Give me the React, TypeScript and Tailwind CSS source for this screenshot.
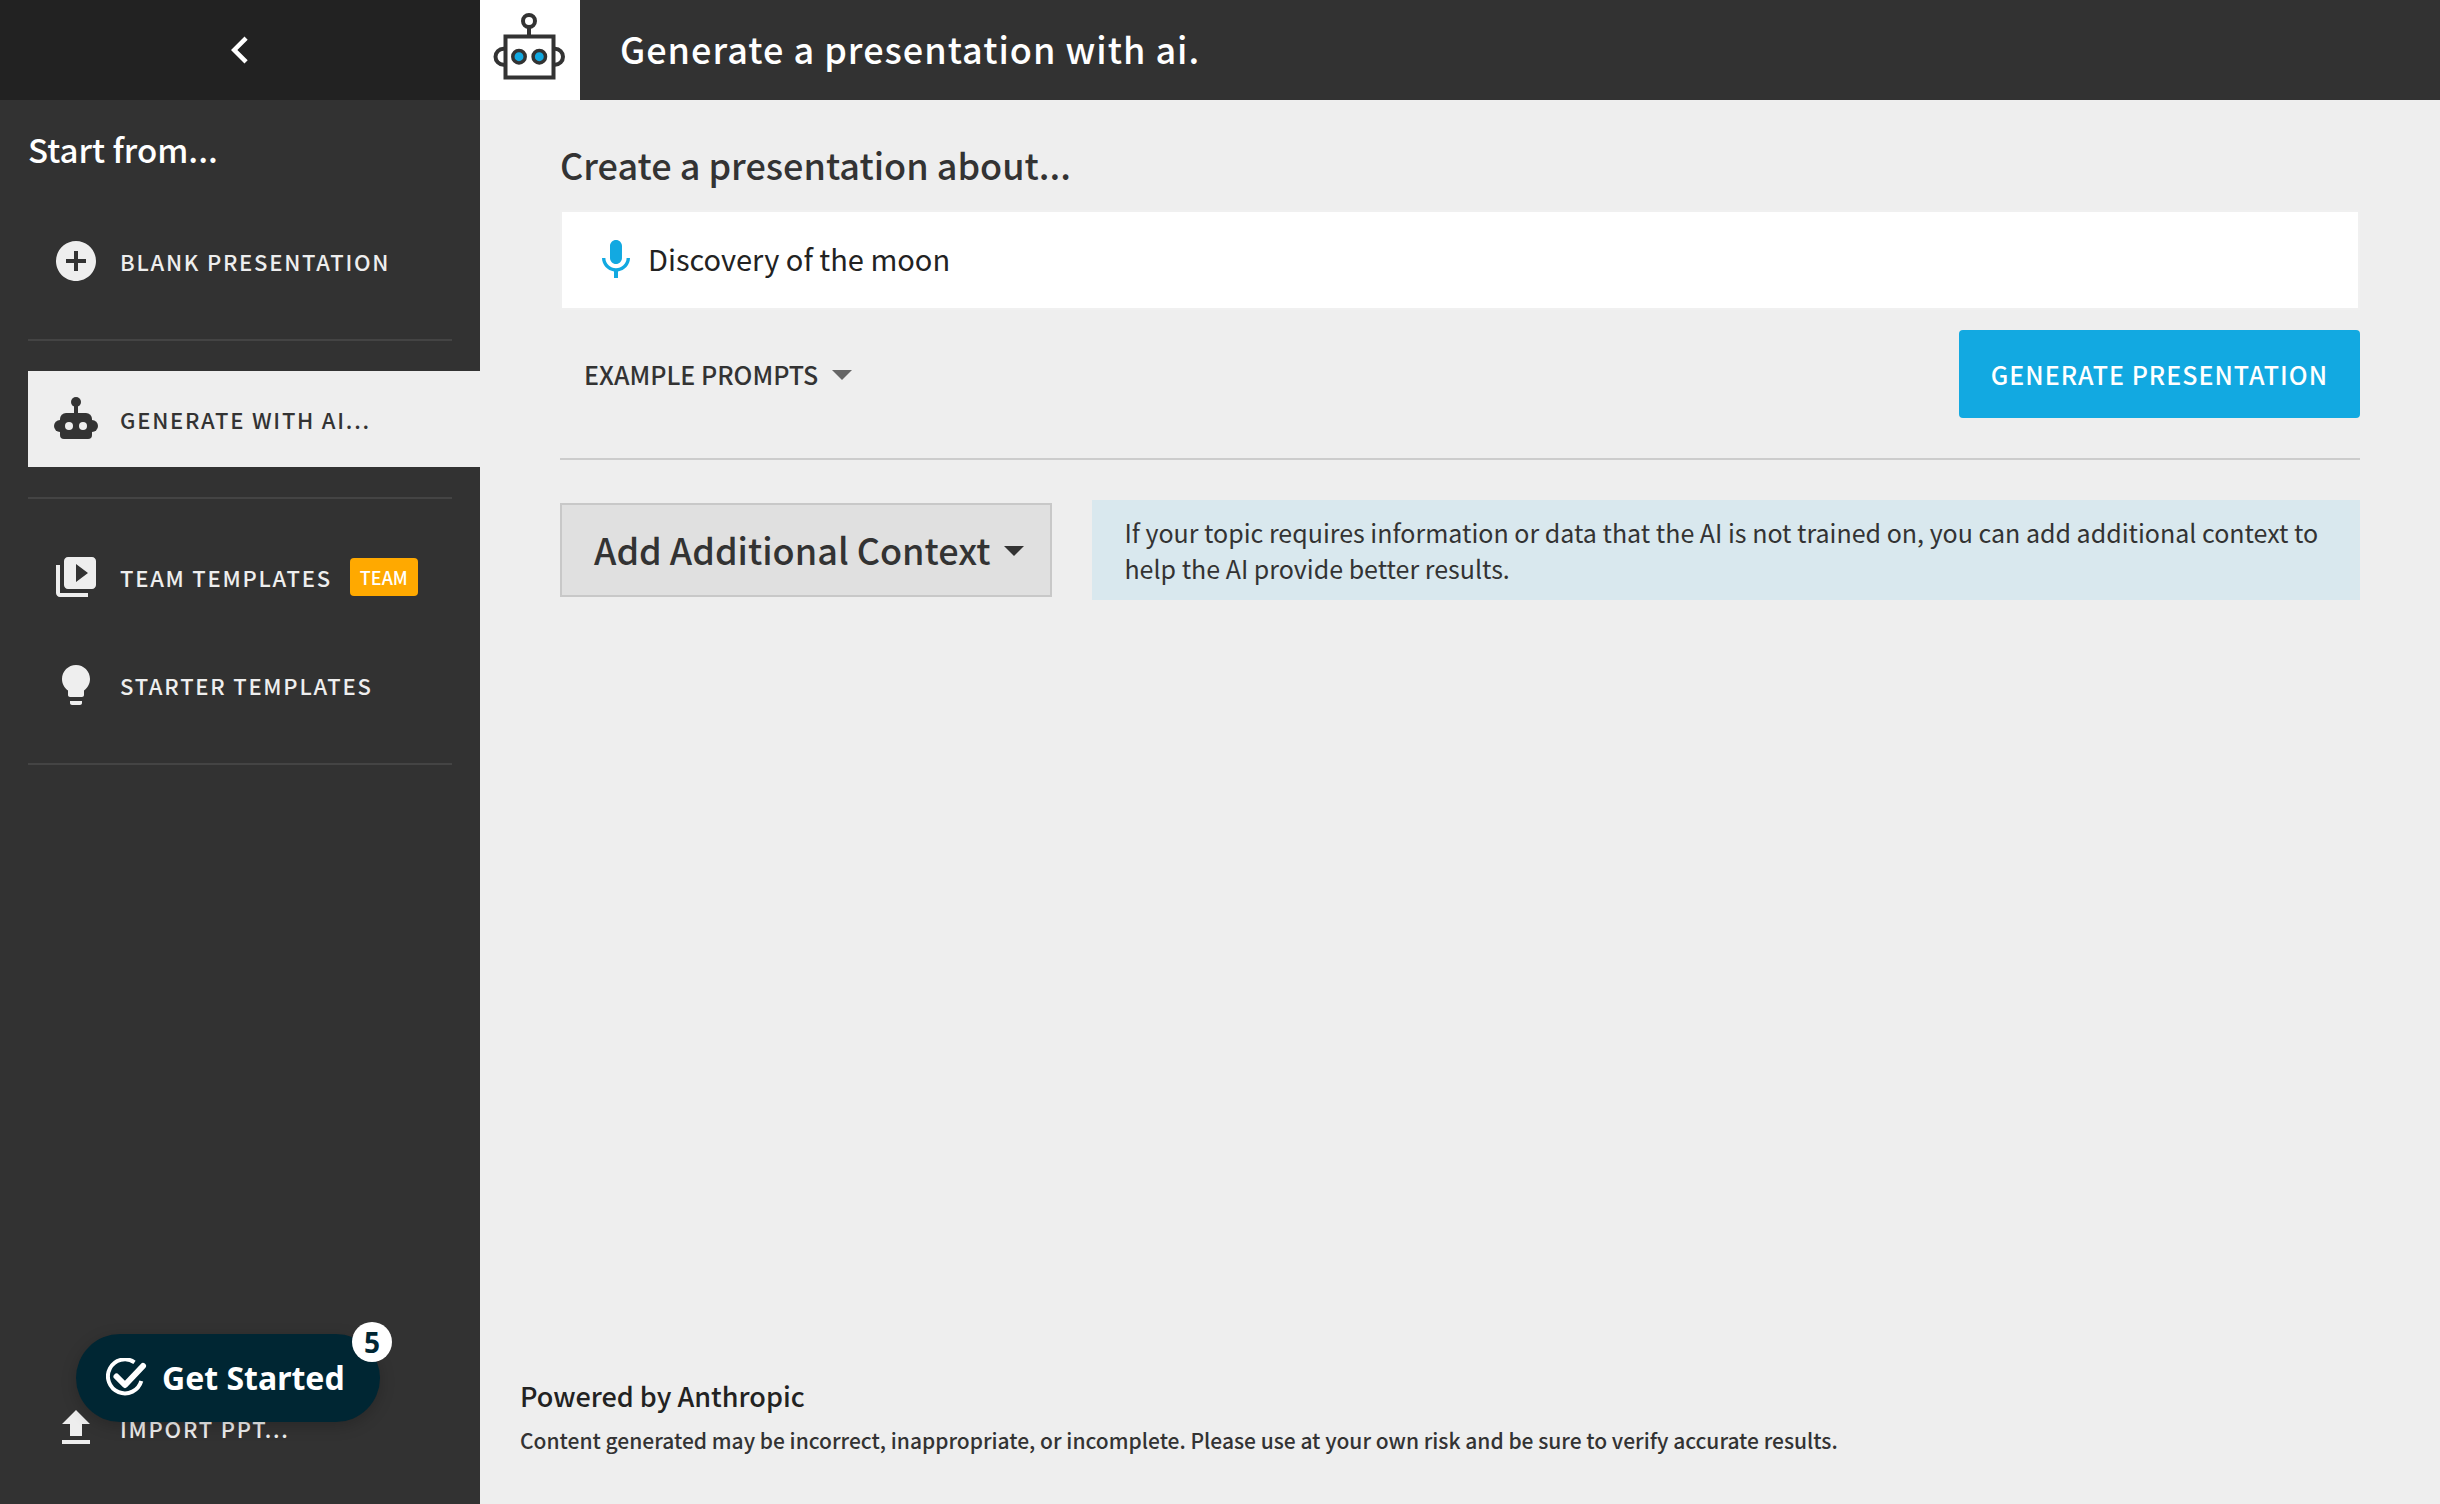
import type { ReactNode } from "react";
import { MdAddCircle, MdArrowDropDown, MdChevronLeft } from "react-icons/md";

function Icon({ d, className = "" }: { d: string; className?: string }) {
  return (
    <svg viewBox="0 0 24 24" fill="currentColor" aria-hidden="true" className={`size-12 shrink-0 ${className}`}>
      <path d={d} />
    </svg>
  );
}

const MIC =
  "M12 14c1.66 0 2.99-1.34 2.99-3L15 5c0-1.66-1.34-3-3-3S9 3.34 9 5v6c0 1.66 1.34 3 3 3zm5.3-3c0 3-2.54 5.1-5.3 5.1S6.7 14 6.7 11H5c0 3.41 2.72 6.23 6 6.72V21h2v-3.28c3.28-.48 6-3.3 6-6.72h-1.7z";
const LIBRARY =
  "M4 6H2v14c0 1.1.9 2 2 2h14v-2H4V6zm16-4H8c-1.1 0-2 .9-2 2v12c0 1.1.9 2 2 2h12c1.1 0 2-.9 2-2V4c0-1.1-.9-2-2-2zm-8 12.5v-9l6 4.5-6 4.5z";
const BULB =
  "M9 21c0 .55.45 1 1 1h4c.55 0 1-.45 1-1v-1H9v1zm3-19C8.14 2 5 5.14 5 9c0 2.38 1.19 4.47 3 5.74V17c0 .55.45 1 1 1h6c.55 0 1-.45 1-1v-2.26c1.81-1.27 3-3.36 3-5.74 0-3.86-3.14-7-7-7z";
const UPLOAD = "M9 16h6v-6h4l-7-7-7 7h4zm-4 2h14v2H5z";

function RobotIcon() {
  return (
    <svg viewBox="0 0 24 24" aria-hidden="true" className="size-12 shrink-0">
      <g fill="currentColor">
        <circle cx="12" cy="3.5" r="2.5" />
        <rect x="11" y="4" width="2" height="6" />
        <path d="M7 9h10a3 3 0 0 1 3 3v8a2 2 0 0 1-2 2H6a2 2 0 0 1-2-2v-8a3 3 0 0 1 3-3z" />
        <circle cx="4" cy="15.5" r="3" />
        <circle cx="20" cy="15.5" r="3" />
      </g>
      <circle cx="8.5" cy="15.5" r="2" fill="#eeeeee" />
      <circle cx="15.5" cy="15.5" r="2" fill="#eeeeee" />
    </svg>
  );
}

function RobotLogo() {
  return (
    <svg viewBox="0 0 100 100" fill="none" stroke="#333333" strokeWidth="4" aria-hidden="true" className="size-full">
      <circle cx="49" cy="21" r="6" />
      <path d="M49 27v9" />
      <path d="M25 48.7h-1.500a8 8 0 0 0 0 16H25M74 48.700h1a8 8 0 0 1 0 16h-1" />
      <rect x="25.5" y="36.5" width="48" height="41" />
      <g fill="#12a9e1" strokeWidth="3.5">
        <circle cx="39" cy="56.7" r="6.2" />
        <circle cx="59.3" cy="56.7" r="6.2" />
      </g>
    </svg>
  );
}

function CheckBadgeIcon() {
  return (
    <svg viewBox="0 0 42 40" fill="none" stroke="white" aria-hidden="true" className="h-10 w-[42px] shrink-0">
      <path d="M28.5 4.3A17 17 0 1 0 35.3 23" strokeWidth="4" />
      <path d="M10.5 18.5l8.500 8.500L37 8" strokeWidth="6" strokeLinecap="round" strokeLinejoin="round" />
    </svg>
  );
}

function NavItem({ icon, label, active = false, children }: { icon: ReactNode; label: string; active?: boolean; children?: ReactNode }) {
  return (
    <button
      type="button"
      className={`flex h-24 w-full items-center px-6 text-left text-[22px] leading-8 font-medium ${
        active ? "bg-[#eeeeee] text-[#333333]" : "text-[#eeeeee]"
      }`}
    >
      {icon}
      <span className="ml-5 tracking-[0.08em]">{label}</span>
      {children}
    </button>
  );
}

function Divider() {
  return <hr className="my-[30px] mr-7 h-0.5 border-0 bg-[#444444]" />;
}

export default function App() {
  return (
    <div className="flex min-h-screen bg-[#eeeeee] font-['Noto_Sans_CJK_SC','Noto_Sans',sans-serif] text-[#333333]">
      <aside className="flex w-[480px] shrink-0 flex-col bg-[#323232]">
        <button type="button" aria-label="Back" className="flex h-[100px] items-center justify-center bg-[#222222] text-white">
          <MdChevronLeft className="size-[54px]" />
        </button>
        <h2 className="mt-[25px] mb-10 pl-7 text-[33px] leading-[48px] font-medium text-white">Start from...</h2>
        <nav className="flex grow flex-col pb-7 pl-7">
          <NavItem icon={<MdAddCircle className="size-12 shrink-0" />} label="BLANK PRESENTATION" />
          <Divider />
          <NavItem icon={<RobotIcon />} label="GENERATE WITH AI..." active />
          <Divider />
          <NavItem icon={<Icon d={LIBRARY} />} label="TEAM TEMPLATES">
            <span className="ml-[18px] flex h-[38px] items-center rounded bg-[#ffa900] px-2.5 text-[18px] text-white">TEAM</span>
          </NavItem>
          <div className="mt-3">
            <NavItem icon={<Icon d={BULB} />} label="STARTER TEMPLATES" />
          </div>
          <Divider />
          <div className="relative mt-auto">
            <NavItem icon={<Icon d={UPLOAD} />} label="IMPORT PPT..." />
            <button
              type="button"
              className="absolute bottom-[54px] left-12 flex h-[88px] w-[304px] items-center rounded-full bg-[#002633] pl-[30px] font-['Noto_Sans',sans-serif] text-[32px] font-bold text-white shadow-[0_4px_16px_rgba(0,0,0,0.2)]"
            >
              <CheckBadgeIcon />
              <span className="ml-3.5">Get Started</span>
              <span className="absolute -top-3 -right-3 flex size-10 items-center justify-center rounded-full bg-white text-[28px] text-[#002633]">
                5
              </span>
            </button>
          </div>
        </nav>
      </aside>

      <div className="flex min-w-0 grow flex-col">
        <header className="flex h-[100px] items-center bg-[#323232]">
          <div className="size-[100px] shrink-0 bg-white">
            <RobotLogo />
          </div>
          <h1 className="pb-1 pl-10 text-[36px] leading-[50px] font-medium tracking-[1px] text-white">Generate a presentation with ai.</h1>
        </header>

        <main className="flex grow flex-col px-20 pt-[39px]">
          <label htmlFor="topic" className="text-[36px] leading-[50px] font-medium">
            Create a presentation about...
          </label>
          <div className="mt-[21px] flex h-[100px] items-center border-2 border-[#f0f0f0] bg-white pl-[30px]">
            <Icon d={MIC} className="text-[#12a9e1]" />
            <input
              id="topic"
              type="text"
              defaultValue="Discovery of the moon"
              className="ml-2 grow pb-1 text-[29px] leading-[44px] text-[#222222] outline-none"
            />
          </div>
          <div className="mt-5 flex items-center justify-between">
            <button type="button" className="flex items-center pl-6 text-[25px] leading-9 font-medium">
              EXAMPLE PROMPTS
              <MdArrowDropDown className="size-12 text-[#666666]" />
            </button>
            <button type="button" className="h-[88px] rounded bg-[#12a9e1] px-8 text-[25px] leading-9 font-medium tracking-[1px] text-white">
              GENERATE PRESENTATION
            </button>
          </div>
          <hr className="my-10 h-0.5 border-0 bg-[#cccccc]" />
          <div className="flex items-center gap-10">
            <button type="button" className="flex h-[94px] shrink-0 items-center border-2 border-[#c8c8c8] bg-[#e0e0e0] pr-3 pl-8 text-[36px] leading-[50px] font-medium">
              <span className="pb-0.5">Add Additional Context</span>
              <MdArrowDropDown className="size-12" />
            </button>
            <p className="grow bg-[#d9e8ee] px-8 py-3.5 text-[25px] leading-9">
              If your topic requires information or data that the AI is not trained on, you can add additional context to help the AI provide
              better results.
            </p>
          </div>
        </main>

        <footer className="px-10 pb-12 text-[#222222]">
          <p className="text-[27px] leading-10 font-medium">Powered by Anthropic</p>
          <p className="mt-2 text-[21px] leading-8 font-medium text-[#333333]">
            Content generated may be incorrect, inappropriate, or incomplete. Please use at your own risk and be sure to verify accurate
            results.
          </p>
        </footer>
      </div>
    </div>
  );
}
